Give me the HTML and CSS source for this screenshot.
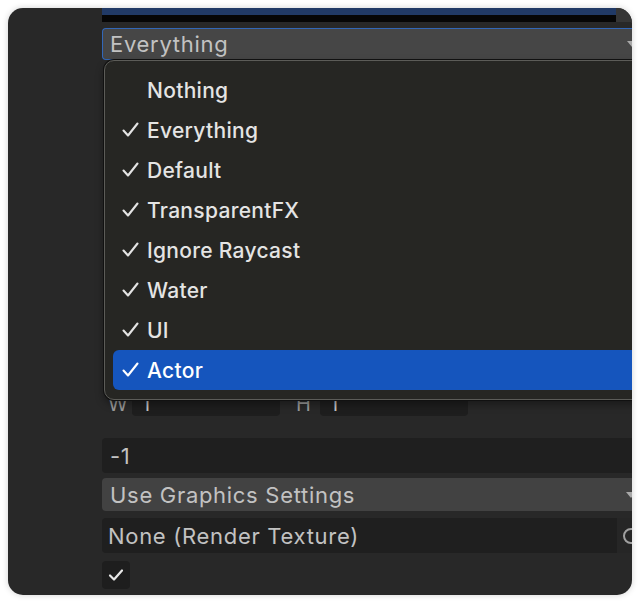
FILE: index.html
```html
<!DOCTYPE html>
<html>
<head>
<meta charset="utf-8">
<link rel="stylesheet" href="styles.css">
</head>
<body>
<div class="window">
  <div class="column">
    <div class="topstrip">
      <div class="topbar"><div class="blue"></div><div class="black"></div></div>
      <div class="topcap"></div>
    </div>
    <div class="field dropdown focused">
      <span class="label">Everything</span>
      <span class="arrow"></span>
    </div>
    <div class="hidden-rows"></div>
    <div class="wh-row">
      <span class="axis">W</span>
      <div class="num">1</div>
      <span class="axis axis-h">H</span>
      <div class="num">1</div>
    </div>
    <div class="field text depth"><span class="label">-1</span></div>
    <div class="field dropdown"><span class="label">Use Graphics Settings</span><span class="arrow"></span></div>
    <div class="field text objfield">
      <span class="label obj-label">None (Render Texture)</span>
      <span class="picker"><span class="ring"></span></span>
    </div>
    <div class="checkbox">
      <svg width="18" height="18" viewBox="0 0 18 18"><path d="M3 9.5 L7 13.5 L15 4.5" fill="none" stroke="#e8e8e8" stroke-width="2.2" stroke-linecap="round" stroke-linejoin="round"/></svg>
    </div>
  </div>

  <div class="menu">
    <div class="item"><span class="check"></span><span>Nothing</span></div>
    <div class="item"><span class="check"><svg width="17" height="16" viewBox="0 0 17 16"><path d="M1.5 8.5 L6 13.5 L15.5 1.5" fill="none" stroke="#e4e4e4" stroke-width="2.1" stroke-linecap="round" stroke-linejoin="round"/></svg></span><span>Everything</span></div>
    <div class="item"><span class="check"><svg width="17" height="16" viewBox="0 0 17 16"><path d="M1.5 8.5 L6 13.5 L15.5 1.5" fill="none" stroke="#e4e4e4" stroke-width="2.1" stroke-linecap="round" stroke-linejoin="round"/></svg></span><span>Default</span></div>
    <div class="item"><span class="check"><svg width="17" height="16" viewBox="0 0 17 16"><path d="M1.5 8.5 L6 13.5 L15.5 1.5" fill="none" stroke="#e4e4e4" stroke-width="2.1" stroke-linecap="round" stroke-linejoin="round"/></svg></span><span>TransparentFX</span></div>
    <div class="item"><span class="check"><svg width="17" height="16" viewBox="0 0 17 16"><path d="M1.5 8.5 L6 13.5 L15.5 1.5" fill="none" stroke="#e4e4e4" stroke-width="2.1" stroke-linecap="round" stroke-linejoin="round"/></svg></span><span>Ignore Raycast</span></div>
    <div class="item"><span class="check"><svg width="17" height="16" viewBox="0 0 17 16"><path d="M1.5 8.5 L6 13.5 L15.5 1.5" fill="none" stroke="#e4e4e4" stroke-width="2.1" stroke-linecap="round" stroke-linejoin="round"/></svg></span><span>Water</span></div>
    <div class="item"><span class="check"><svg width="17" height="16" viewBox="0 0 17 16"><path d="M1.5 8.5 L6 13.5 L15.5 1.5" fill="none" stroke="#e4e4e4" stroke-width="2.1" stroke-linecap="round" stroke-linejoin="round"/></svg></span><span>UI</span></div>
    <div class="item selected"><span class="check"><svg width="17" height="16" viewBox="0 0 17 16"><path d="M1.5 8.5 L6 13.5 L15.5 1.5" fill="none" stroke="#ffffff" stroke-width="2.1" stroke-linecap="round" stroke-linejoin="round"/></svg></span><span>Actor</span></div>
  </div>
</div>
</body>
</html>
```
FILE: styles.css
```css
html, body {
  margin: 0;
  padding: 0;
  background: #ffffff;
}
body {
  width: 640px;
  height: 604px;
  overflow: hidden;
}
.window {
  position: relative;
  margin: 8px 0 0 8px;
  width: 624px;
  height: 587px;
  border-radius: 15px;
  background: #282828;
  overflow: hidden;
  box-shadow: 0 0 6px rgba(0, 0, 0, 0.18);
  font-family: Inter, "Liberation Sans", sans-serif;
}
.column {
  margin-left: 94px;
  width: 560px;
  display: flex;
  flex-direction: column;
}
.topstrip {
  display: flex;
  height: 14px;
}
.topbar {
  width: 514px;
  display: flex;
  flex-direction: column;
}
.topbar .blue { height: 7px; background: #213a66; }
.topbar .black { height: 7px; background: #060606; }
.topcap {
  width: 16px;
  background: #363636;
}
.field {
  position: relative;
  box-sizing: border-box;
  display: flex;
  align-items: center;
  border-radius: 4px 0 0 4px;
  color: #c2c2c2;
  font-size: 22px;
  letter-spacing: 0.7px;
}
.field .label { padding-left: 8px; }
.dropdown {
  background: #424242;
  height: 33px;
}
.dropdown.focused {
  margin-top: 6px;
  height: 32px;
  background: #464646;
  border: 1px solid #3267b8;
  border-right: none;
}
.dropdown.focused .label { padding-left: 7px; }
.arrow {
  position: absolute;
  left: 524px;
  top: 50%;
  margin-top: -3px;
  width: 0;
  height: 0;
  border-left: 5px solid transparent;
  border-right: 5px solid transparent;
  border-top: 6px solid #a8a8a8;
}
.hidden-rows {
  height: 332px;
}
.wh-row {
  display: flex;
  align-items: center;
  height: 24px;
  color: #9a9a9a;
  font-size: 20px;
}
.axis {
  width: 30px;
  padding-left: 6px;
  box-sizing: border-box;
}
.axis-h { width: 40px; padding-left: 16px; }
.num {
  width: 148px;
  height: 24px;
  box-sizing: border-box;
  padding-left: 10px;
  background: #1e1e1e;
  border-radius: 4px;
  color: #c4c4c4;
  line-height: 24px;
}
.text {
  background: #1f1f1f;
  height: 35px;
}
.depth { margin-top: 22px; }
.column > .dropdown:not(.focused) { margin-top: 5px; }
.objfield { margin-top: 7px; height: 35px; }
.obj-label { padding-left: 6px !important; }
.picker {
  position: absolute;
  left: 515px;
  top: 0;
  bottom: 0;
  width: 40px;
  background: #262626;
}
.ring {
  position: absolute;
  left: 6px;
  top: 10px;
  width: 12px;
  height: 12px;
  border: 2px solid #a0a0a0;
  border-radius: 50%;
}
.checkbox {
  margin-top: 8px;
  width: 28px;
  height: 28px;
  border-radius: 4px;
  background: #1e1e1e;
  display: flex;
  align-items: center;
  justify-content: center;
}
.menu {
  position: absolute;
  left: 96px;
  top: 52px;
  width: 560px;
  height: 340px;
  box-sizing: border-box;
  padding: 9px 0 0 8px;
  background: #262623;
  border: 1px solid #5c5c58;
  border-radius: 10px;
  box-shadow: 0 0 0 1px #111111, 0 4px 8px rgba(0, 0, 0, 0.4);
  font-family: Inter, "Liberation Sans", sans-serif;
  font-size: 21px;
  font-weight: 500;
  letter-spacing: 0.3px;
  color: #e4e4e4;
}
.item {
  display: flex;
  align-items: center;
  height: 40px;
  border-radius: 6px;
}
.check {
  width: 34px;
  box-sizing: border-box;
  padding-left: 9px;
  display: flex;
  align-items: center;
}
.item.selected {
  background: #1555bd;
  color: #ffffff;
}
```
